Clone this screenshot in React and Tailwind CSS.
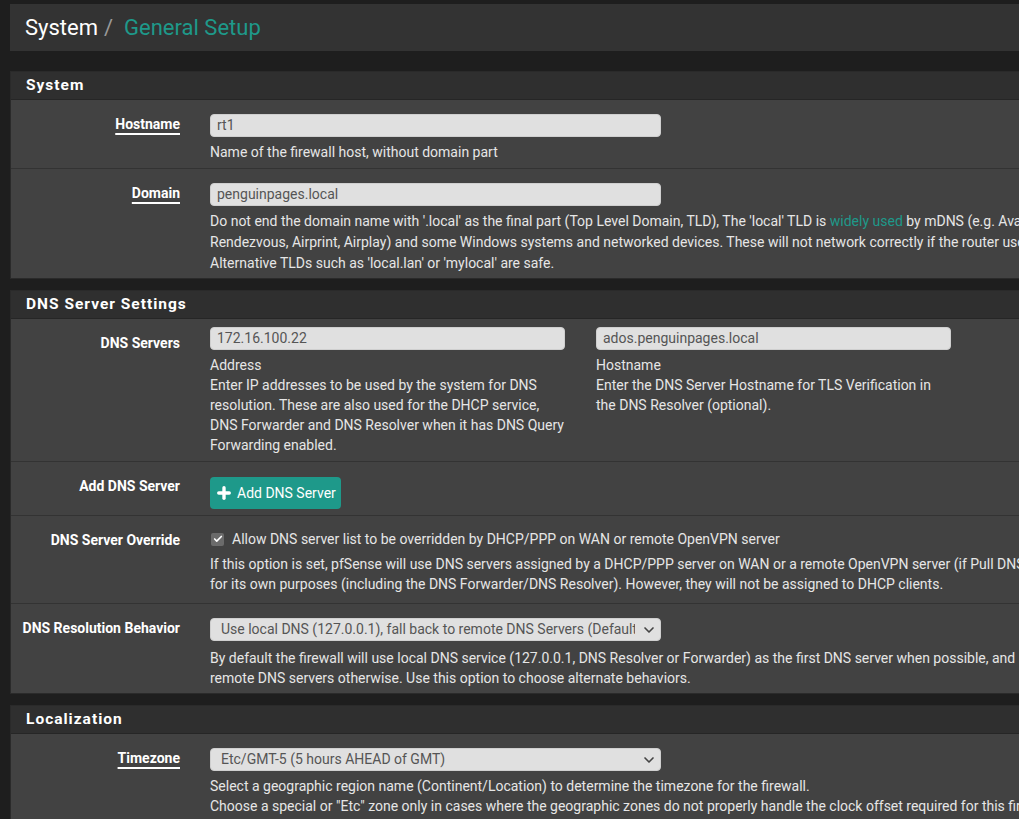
import { Plus, ChevronDown, Check } from 'lucide-react';

const Panel = ({ title, children }) => (
  <div className="mb-[11px] border border-[#2a2a2a] bg-[#424242]">
    <div className="h-[28px] bg-[#2f2f2f] border-b border-[#262626] px-[15px] flex items-center text-[15.5px] font-bold tracking-[1px] text-white">
      {title}
    </div>
    {children}
  </div>
);

const Row = ({ label, underline, className = 'pt-[14px] pb-[5px]', children }) => (
  <div className="flex border-b border-[#333] last:border-b-0">
    <div className="w-[199px] shrink-0 pr-[30px] pt-[14px] text-right text-[14px] font-bold leading-[20px] text-white">
      <span className={underline ? 'underline underline-offset-[4px] decoration-[1.5px]' : ''}>{label}</span>
    </div>
    <div className={'flex-1 min-w-0 ' + className}>{children}</div>
  </div>
);

const Input = ({ value, width = 'w-[451px]' }) => (
  <div className={width + ' h-[23px] rounded-[4px] bg-[#e0e0e0] border border-[#cfcfcf] px-[6px] text-[14px] leading-[21px] text-[#555]'}>
    {value}
  </div>
);

const Select = ({ value }) => (
  <div className="relative w-[451px] h-[23px] rounded-[4px] bg-[#e0e0e0] border border-[#cfcfcf] pl-[10px] pr-[25px] text-[14px] leading-[21px] text-[#555]">
    <div className="whitespace-nowrap overflow-hidden">{value}</div>
    <ChevronDown className="absolute right-[3px] top-[3px] w-[16px] h-[16px] text-[#444]" strokeWidth={2.5} />
  </div>
);

const Help = ({ className = 'mt-[5px] leading-[21px]', children }) => (
  <div className={'text-[14px] text-[#e6e6e6] whitespace-nowrap ' + className}>{children}</div>
);

export default function App() {
  return (
    <div className="min-h-[819px] bg-[#1e1e1e] overflow-hidden font-['Roboto',sans-serif]">
      <div className="w-[1400px] pl-[10px] pt-[4px]">
        {/* Breadcrumb header */}
        <div className="h-[47px] bg-[#333] flex items-center pl-[15px] text-[22px] mb-[20px]">
          <span className="text-white">System</span>
          <span className="text-[#999] ml-[6px]">/</span>
          <span className="text-[#1e998a] ml-[11px]">General Setup</span>
        </div>

        <Panel title="System">
          <Row label="Hostname" underline>
            <Input value="rt1" />
            <Help>Name of the firewall host, without domain part</Help>
          </Row>
          <Row label="Domain" underline className="pt-[14px] pb-[4px]">
            <Input value="penguinpages.local" />
            <Help>
              Do not end the domain name with '.local' as the final part (Top Level Domain, TLD), The 'local' TLD is{' '}
              <span className="text-[#1e998a]">widely used</span> by mDNS (e.g. Avahi, Bonjour,
              <br />
              Rendezvous, Airprint, Airplay) and some Windows systems and networked devices. These will not network correctly if the router uses 'local' as its TLD.
              <br />
              Alternative TLDs such as 'local.lan' or 'mylocal' are safe.
            </Help>
          </Row>
        </Panel>

        <Panel title="DNS Server Settings">
          <Row label="DNS Servers" className="pt-[8px] pb-[6px]">
            <div className="flex gap-[31px]">
              <div className="w-[355px]">
                <Input value="172.16.100.22" width="w-[355px]" />
                <div className="mt-[5px] text-[14px] leading-[20px] text-[#e6e6e6]">
                  Address
                  <br />
                  Enter IP addresses to be used by the system for DNS resolution. These are also used for the DHCP service, DNS Forwarder and DNS Resolver when it has DNS Query Forwarding enabled.
                </div>
              </div>
              <div className="w-[355px]">
                <Input value="ados.penguinpages.local" width="w-[355px]" />
                <div className="mt-[5px] text-[14px] leading-[20px] text-[#e6e6e6]">
                  Hostname
                  <br />
                  Enter the DNS Server Hostname for TLS Verification in the DNS Resolver (optional).
                </div>
              </div>
            </div>
          </Row>
          <Row label="Add DNS Server" className="pt-[15px] pb-[6px]">
            <button className="h-[32px] pl-[5px] pr-[5px] rounded-[4px] bg-[#1e998a] flex items-center gap-[4px] text-[14px] text-white">
              <Plus className="w-[18px] h-[18px]" strokeWidth={4.5} />
              Add DNS Server
            </button>
          </Row>
          <Row label="DNS Server Override" className="pt-[13px] pb-[9px]">
            <div className="flex items-center h-[20px] text-[14px] text-[#e6e6e6]">
              <span className="w-[13px] h-[13px] ml-[1px] mr-[8px] rounded-[2px] bg-[#6b6b6b] flex items-center justify-center">
                <Check className="w-[10px] h-[10px] text-white" strokeWidth={4} />
              </span>
              Allow DNS server list to be overridden by DHCP/PPP on WAN or remote OpenVPN server
            </div>
            <Help className="mt-[5px] leading-[20px]">
              If this option is set, pfSense will use DNS servers assigned by a DHCP/PPP server on WAN or a remote OpenVPN server (if Pull DNS option is enabled)
              <br />
              for its own purposes (including the DNS Forwarder/DNS Resolver). However, they will not be assigned to DHCP clients.
            </Help>
          </Row>
          <Row label="DNS Resolution Behavior" className="pt-[14px] pb-[5px]">
            <Select value="Use local DNS (127.0.0.1), fall back to remote DNS Servers (Default)" />
            <Help className="mt-[8px] leading-[19.5px]">
              By default the firewall will use local DNS service (127.0.0.1, DNS Resolver or Forwarder) as the first DNS server when possible, and it will fall back to
              <br />
              remote DNS servers otherwise. Use this option to choose alternate behaviors.
            </Help>
          </Row>
        </Panel>

        <Panel title="Localization">
          <Row label="Timezone" underline className="pt-[14px] pb-[5px]">
            <Select value="Etc/GMT-5 (5 hours AHEAD of GMT)" />
            <Help className="mt-[5px] leading-[20px]">
              Select a geographic region name (Continent/Location) to determine the timezone for the firewall.
              <br />
              Choose a special or "Etc" zone only in cases where the geographic zones do not properly handle the clock offset required for this firewall.
            </Help>
          </Row>
        </Panel>
      </div>
    </div>
  );
}
